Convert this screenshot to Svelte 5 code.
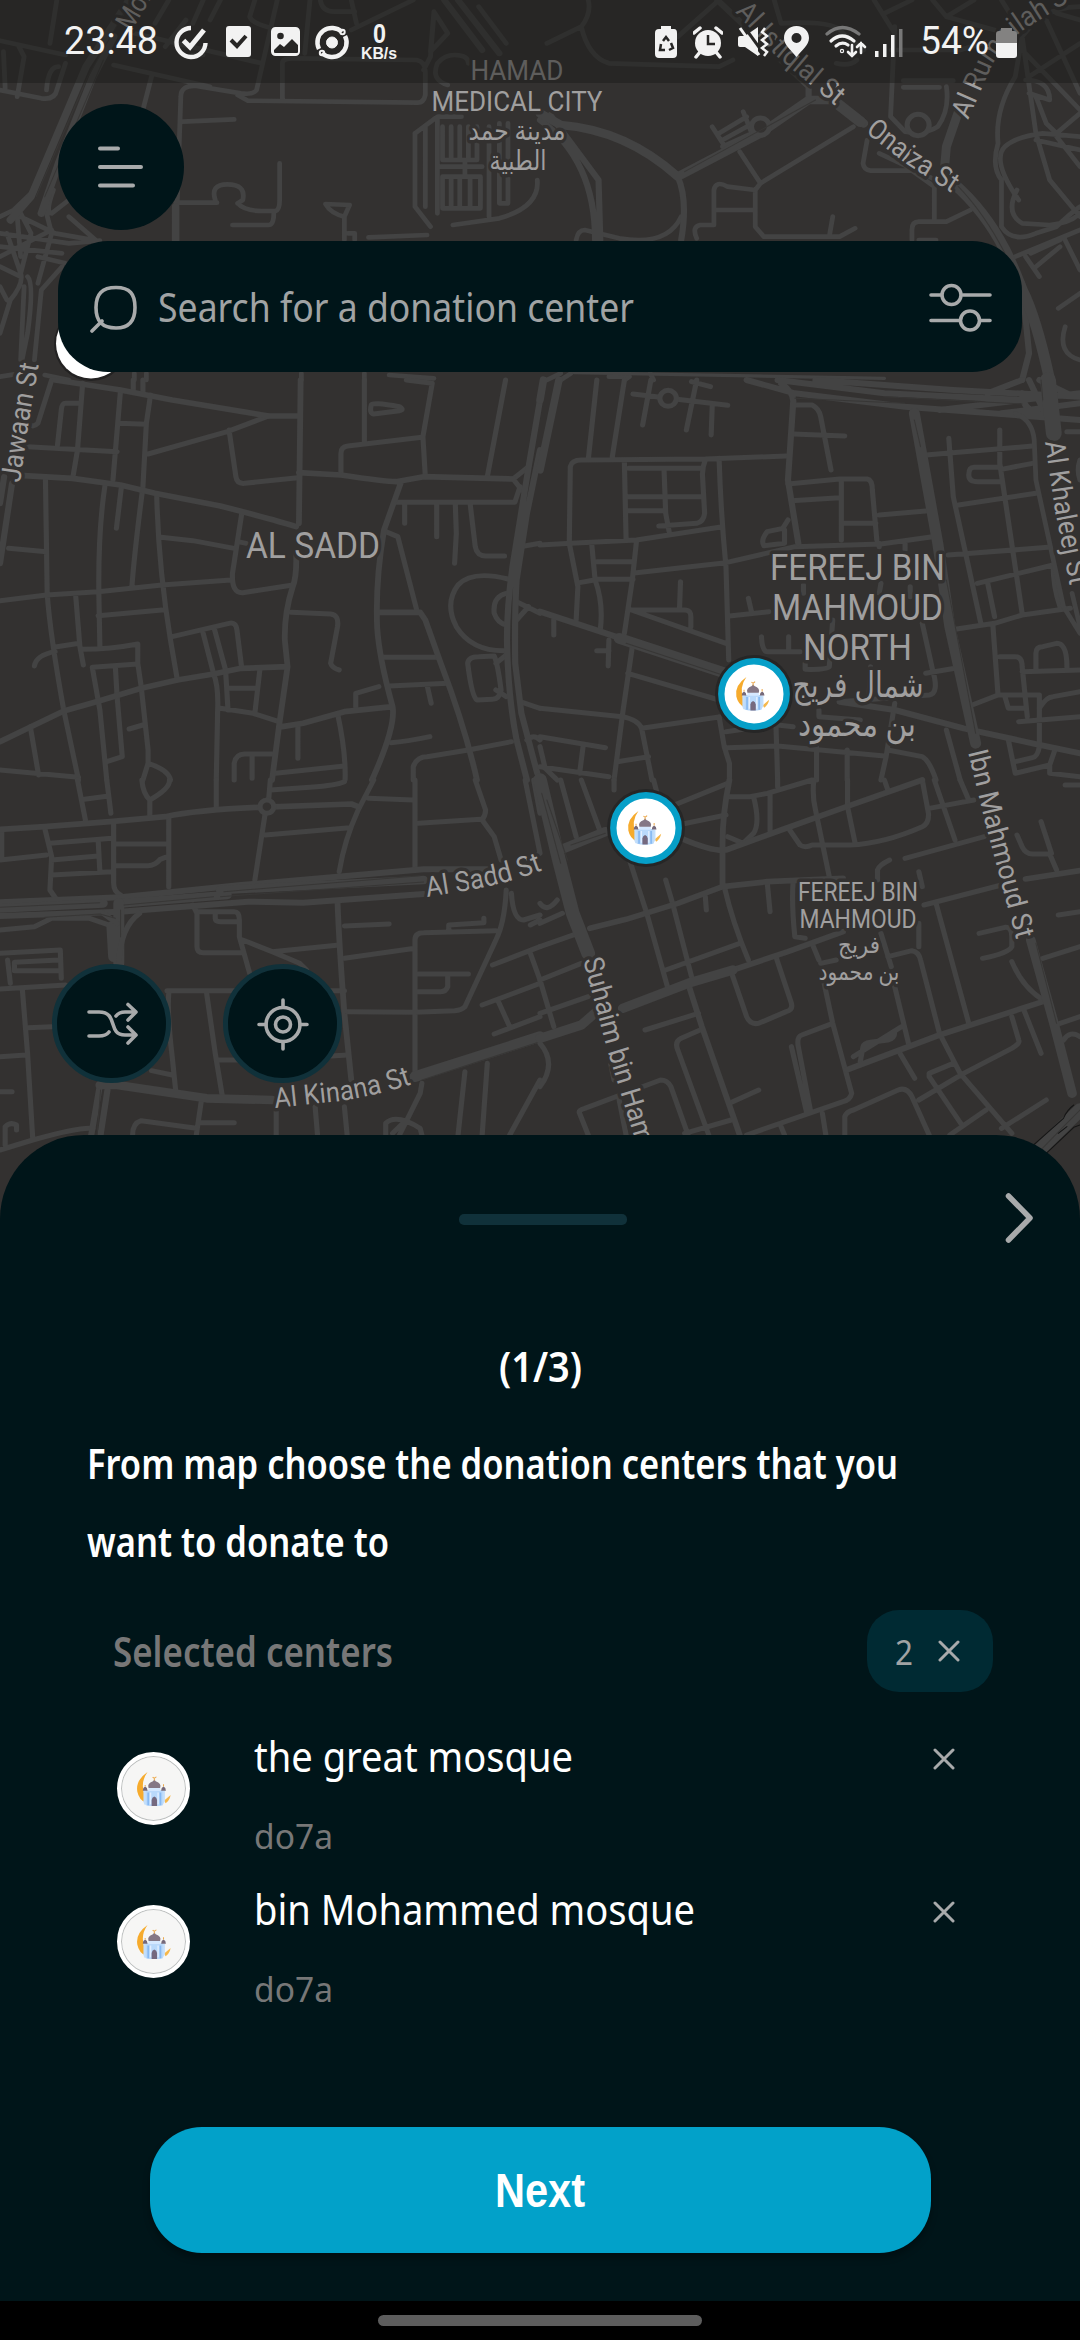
<script>
  // Road network, stored as map tiles: origin, then strokes by width.
  const tiles = [
    {
      x: 0, y: 0,
      roads: [
        [14, 'M165 0L145 130M0 122L190 165M10 155L15 265M55 140L70 170L50 290M0 270L120 295Q160 300 165 270L190 190M135 270Q140 200 170 200M330 195L610 260M390 100L760 190M740 0L725 50Q730 70 790 85M805 0L745 270Q735 285 700 280L570 258Q525 255 525 290L515 600M820 300V190Q820 175 850 175L1210 180Q1235 185 1235 215V285Q1230 310 1210 308L720 302L690 285M440 230L410 350M530 365L680 358M510 608H630M625 600Q610 553 660 553Q715 553 705 600L690 610M690 610Q710 633 760 633H800Q812 630 812 600V490M795 640Q795 675 780 675H675M900 0L885 160M930 0Q935 35 970 35H1030M1020 90L1200 0M1020 0L1035 70M1260 35L1300 100L1250 155ZM1260 40L1250 170L1230 210M1270 190Q1290 165 1320 165Q1360 165 1360 190M1270 190Q1250 240 1300 255M1390 20L1470 130M1205 400L1270 350H1340M1205 400V620L1250 680M1235 380V620M1270 350V640M1285 380V480H1385V380M1310 380V480M1335 380V480M1360 380V480M1285 530V625H1395V530ZM1310 530V625M1335 530V625M1365 530V625M1420 380V650M1450 370V610H1475V370M1280 500H1400M1350 480V530M1315 675L1450 655Q1568 620 1560 540M1240 705L1070 712M945 612Q960 640 1000 650L1015 615ZM1000 650V720M1030 720V700H1010M540 60L480 140M590 0L560 70M640 0L610 60M490 0L450 70M560 165H590M0 1130L60 1120M130 1125L200 1140M390 1120V1140M425 1120V1140M875 1120V1140M1058 1120V1140M1130 1125L1260 1135'],
        [14, 'M0 700L200 730L290 722M0 740L180 760M0 770L150 690M40 640L160 700L280 722M0 650L40 630L90 580M60 640L90 700L60 820M130 620L150 700L110 850M200 650L280 722M20 700L60 820Q70 850 30 900L0 1000M80 830Q100 850 80 1000L60 1100M180 800L120 870L100 1080M0 800L60 830M190 790L110 770M50 650L60 770M155 570Q130 640 150 640L200 600M20 900L0 860M60 1080L70 860'],
        [22, 'M375 0L250 200L90 590L30 660M330 110L270 230L170 490L120 640M510 620V722'],
        [18, 'M1290 0L1400 150M1330 0L1450 160']
      ],
      seams: 'M360 40L255 230L105 590M300 180L130 590'
    },
    {
      x: 540, y: 0,
      roads: [
        [14, 'M140 0Q150 40 120 80L20 130M120 80Q140 170 200 190L520 200L560 180M400 110L520 0M680 0L700 70Q860 60 880 100L940 150M690 140Q700 180 760 190M860 190Q900 200 920 180M500 380L540 445M520 400L600 350M590 335L615 400L530 440M530 420L600 380M410 650Q370 740 230 715L130 690Q110 690 105 720M580 455L640 550L910 380M640 550L625 570L545 560Q510 540 505 570V675H465Q440 680 455 715M510 630H620M625 570V680L650 710H870L915 685M850 650L840 710M950 420L938 490Q940 510 960 512H1080L1145 560V660M985 460L1150 540M1250 630L1180 665H1100Q1080 665 1080 690V720M1030 80L1018 350L1060 395Q1120 405 1155 380Q1190 330 1180 260M1055 242H1200M1055 262H1160M1020 150H1220L1380 100M970 0L1030 100M1000 40L1080 0M1140 0L1180 50L1260 0M1180 50L1320 90M1340 0L1400 100M1568 20Q1500 20 1440 60L1400 110L1380 230Q1320 330 1330 430Q1310 500 1340 540V680Q1370 730 1440 700L1500 680Q1540 640 1568 620M1400 110L1440 400L1480 540L1568 650M1470 60L1568 280M1568 130L1420 230M1400 150L1568 330M1500 40L1568 60M1410 240Q1480 240 1480 300L1420 280M1440 290L1470 370L1500 400L1568 340M1568 410L1460 400Q1380 410 1350 440Q1310 480 1390 600M1500 410L1568 500M1385 570Q1350 640 1400 670L1480 675Q1540 670 1568 640M1568 450L1440 420M1380 770L1568 690M1410 770L1450 830M1425 760L1510 720M1440 800L1510 740M1520 710L1568 810M1505 925L1568 880M1525 980Q1500 1060 1568 1080M60 1120L20 1140M90 1120L60 1140M200 1130H260L245 1140M320 1120L330 1140M1100 720H1150'],
        [18, 'M515 0L780 260V300M1400 850L1420 1060L1400 1140M0 360Q160 480 160 720M30 345L170 540L175 720M400 530Q430 600 410 720'],
        [26, 'M0 340L60 375Q250 390 400 530L640 400L780 300H850L940 370M1220 320L1180 440L1175 500'],
        [32, 'M850 300L930 365M1200 550Q1290 630 1350 750Q1370 790 1400 870Q1440 950 1480 1140'],
        [10, 'M100 1118L1000 1135']
      ],
      rings: [[640, 380, 26], [1098, 375, 32]],
      seams: 'M800 300L420 515M1215 560Q1290 640 1350 760'
    },
    {
      x: 0, y: 380,
      roads: [
        [15, 'M150 0L110 130Q100 140 92 137M780 108L660 155L430 222M665 150L685 290Q688 312 710 310L865 293M240 10L225 210L212 290M235 70H190Q180 70 178 90L167 195M80 200L340 215M350 30L328 300M345 130L425 133M437 45L425 130L415 320Q390 520 383 620M387 0V30M415 0V40M132 300L137 640Q145 760 185 990L228 1200M305 315Q285 450 287 640L290 800M352 325L338 445M455 345Q460 560 495 780L515 900M702 400L675 580Q672 640 705 638L850 615M468 472L560 482L680 505M690 485L715 490M25 505L135 515M0 662L135 645L285 635L470 615L670 600M285 707L470 690M165 800L230 790M220 650L232 800L242 855M240 808Q320 808 400 792V850L410 920L430 1110V1150L415 1200M430 1150Q490 1170 495 1200M100 858Q105 825 160 815M400 852L268 862L290 990L310 1200M335 860L340 950L355 1130L310 1145M88 1040L112 1185M375 1047L415 1035M0 1170L228 1192M500 770L665 730Q685 725 688 750L702 865M590 760L620 880Q635 920 632 990L628 1200M622 745L655 870L662 990M662 925H745M755 865L740 1000M640 985L735 1000L810 1025M845 697L960 702Q985 705 980 740L960 850Q965 865 985 870M990 280V220Q990 200 1010 198L1225 172M1058 0V185M1078 75Q1080 65 1160 80Q1175 90 1160 92L1085 102Q1072 100 1078 75M1180 0L1255 10L1228 170L1235 290M1468 0L1415 290M1150 367H1495L1510 320M1175 370V430M1268 370V470M1322 370L1325 460L1320 550M1365 370L1380 500Q1385 528 1410 528H1465M1120 455L1155 470L1210 690M1110 832H1270M1130 918L1300 910M1240 915L1252 970M865 1040V1135M980 1000Q1005 1120 1002 1200M1033 980V940L1100 920M800 1180L1000 1158M1135 1088Q1180 1085 1248 1070M680 1200V1150Q685 1122 710 1122H795M732 1122V1195M1200 1200V1160Q1210 1130 1240 1130L1360 1110L1485 1085M1475 597Q1370 570 1330 615Q1290 670 1325 740Q1370 815 1470 812M1470 640Q1430 650 1435 700Q1445 730 1470 735M1358 850Q1360 830 1390 830L1435 828Q1445 850 1455 930Q1450 958 1430 958L1385 960Q1370 950 1358 850M1440 850L1470 825M1440 930L1470 950M1490 297L1535 260M1490 297L1515 330M1568 490L1510 500M1500 665L1568 700M1500 720L1535 680M1510 965L1568 985M1530 1080Q1550 1060 1568 1080'],
        [17, 'M160 0L350 30L500 60L780 108H865M70 287L210 295L350 315L450 340L640 378Q800 420 860 440M873 0L868 430M0 1085L90 1040L185 993L280 965L410 925L515 900L620 882L700 865L835 860M860 520Q862 590 850 620Q825 700 827 780L835 860L810 1040L790 1200M868 278L990 285Q1120 305 1150 305L1230 290L1490 297M1165 305L1115 450Q1090 600 1095 740Q1100 830 1140 980Q1150 1040 1080 1200M1100 697H1220L1235 720L1280 850Q1350 1040 1385 1200M820 1040L880 1030L1000 995L1140 980'],
        [18, 'M1568 60L1535 260L1488 560Q1472 680 1472 780Q1475 950 1500 1080L1530 1200M1568 210L1530 400L1500 600Q1494 700 1496 850L1514 1000L1560 1180'],
        [18, 'M35 310L0 550M12 290L0 370']
      ]
    },
    {
      x: 540, y: 380,
      roads: [
        [15, 'M140 240L165 0M245 0L210 230M0 495L90 490L280 480L530 440M85 490L88 260Q92 240 120 240L480 237L715 228M245 245L250 480M258 265H470M360 265L365 400L375 455M480 240Q470 265 472 290L478 400Q475 425 455 430L345 438M255 350H470M255 392H360M270 42L545 76M322 0L298 135M455 0L425 150M440 5L495 20M500 80L497 165M520 235Q525 400 540 560L548 840M150 490L160 600Q185 670 175 750M85 490L110 620L105 720M165 545H270M115 608L170 598H270M280 485L268 600L245 760M268 800L240 1000L215 1200M280 578L540 548L740 500L990 492L1140 470M265 690L540 790M265 690H420Q440 690 438 715V740M408 605L405 690M605 655L615 700M550 708L665 695M40 720V765M200 780L198 858M165 812H200M255 880L520 960M0 985L240 1010Q285 1020 295 1045L325 1200M295 1045L515 1012M225 1145L315 1130M0 1070L190 1103M0 1100L15 1165L50 1200M125 1100L115 1180M0 1160L200 1190M520 1010L535 1100L550 1150V1200M540 1055L590 1048M545 1103L690 1098L1000 1128M685 1030L690 1200M803 1100V1200M892 1110V1200M735 1040L690 1035M735 75H790Q810 85 815 110L845 270M735 162L885 168M720 312L870 297H950Q965 300 965 330L978 480M875 300V480M730 362L870 353M880 430H975M985 405L1120 393M985 490V500M720 420L705 445L660 455Q640 480 650 497L710 490V450M765 615V640M850 720L840 860Q835 870 770 868V850M643 770Q645 815 660 815H755M722 770V810M990 610L985 640M1075 620V650M1060 490V510M960 860L955 960M1120 225L1430 198M1187 175L1200 350L1280 730M1335 150V250L1400 700M1215 375L1440 340M1335 262H1260Q1245 262 1245 285Q1245 305 1270 305H1335M1340 268L1430 250M1185 525L1475 502M1270 610L1490 555M1300 610L1320 710M1205 748L1320 730L1400 705L1540 685M1490 555Q1490 620 1510 680M1110 730L1140 870Q1160 940 1130 945L870 965M1120 880L1205 865M1255 975L1330 945M1330 945H1450V1100Q1445 1130 1430 1133L1380 1145M1315 735L1330 945M1335 830H1380Q1400 830 1400 860L1415 1010M1450 985Q1470 950 1490 950L1568 935M1390 1025L1568 1010M1350 950L1360 985H1410M1440 865V820Q1440 800 1460 800L1500 790Q1530 790 1530 860M1400 875L1568 870M1180 1050L1220 1200M1030 970L1005 1130L990 1200M1010 1110L1110 1130Q1130 1140 1150 1200M1360 1080L1380 1180L1480 1155L1495 1110M1480 1155V1180L1568 1190M810 990V1010L930 1020M1530 155H1568M1568 240Q1558 270 1568 300'],
        [18, 'M600 0L740 40L1060 80L1568 120M690 0L1000 40L1400 60L1568 40M800 0L1200 30L1568 50M1300 40L1400 0M1420 0L1480 130M1550 50L1450 0M1340 100L1568 70M1160 90L1400 60M1400 40Q1400 100 1480 110M700 10Q740 40 735 70L720 300L750 490M0 695L220 770M870 965L1030 990L1230 1045L1430 1090L1568 1120'],
        [14, 'M1380 100Q1430 120 1435 180L1440 300L1520 680L1568 760M1545 640L1568 740'],
        [22, 'M10 0L0 60M55 0L0 270'],
        [32, 'M230 775L540 880M1087 100L1155 490L1190 740L1265 1090'],
        [46, 'M1475 0L1492 160']
      ],
      rings: [[372, 55, 24]],
      seams: 'M250 790L530 885M1087 120L1105 200M1180 600L1265 1060M740 55L1060 70M1000 50L1400 72M1455 0L1460 60'
    },
    {
      x: 0, y: 780,
      roads: [
        [15, 'M225 0L248 120M310 0L322 100M245 58L315 48M412 0Q415 40 435 60V105M492 0Q495 25 435 60M628 0V85M785 30L900 22Q980 15 1000 5M785 0L780 60M770 100L740 300M770 165L1015 143M1085 0L1040 90Q1000 180 985 275M1070 55L1200 60M1205 0V265M1215 130L1395 118M1380 0L1410 90Q1410 105 1400 120L1435 170L1455 240M130 145L150 230L145 330L165 360M0 240L135 225M5 150V235M145 190L325 175M285 180L290 275M150 240L285 228M150 285L325 275M330 130V310Q330 335 350 345M335 192H485M335 257H430Q450 257 465 238L480 232M490 115V320M0 450L100 440L150 415H260L330 440M560 375L572 400V500Q572 518 590 518H705M625 395V415Q625 425 640 425H690M575 395H680Q695 395 695 420V470L725 580M705 480L790 515L870 550L890 570M790 515L985 495M1000 438L1130 432M1000 535L1205 505M1303 450V435L1405 428V415M1205 880V480Q1205 458 1230 458L1440 452M1470 330Q1465 430 1440 480L1350 680Q1340 690 1320 692L1205 697L1010 695M1215 582H1360M1300 590V620Q1295 635 1280 635H1215M1485 340Q1490 420 1520 420L1568 405M1540 435L1568 420M1430 555L1568 500M1540 520L1568 600M1400 675L1568 610M1445 660L1480 740M1435 762L1568 710M0 520L175 510L178 595M22 540L30 610M170 540L42 547V572H170M0 627L190 615M65 630L80 820L95 1075M80 743L150 740M0 830L75 825M485 632H1000M490 640Q485 700 500 830L510 930M600 640L625 820L645 945M630 840H710M440 872L500 885M960 828L1010 825M585 960L570 1065M385 1065Q385 1030 410 1022L570 1045M585 1028H680M802 990V1065M915 980L922 1065M1000 980L1008 1065M1225 910L1220 940L1160 1065M1350 875L1330 1065M1415 850L1400 1065M1568 900L1480 1065M1120 1065V1030Q1150 1000 1220 1045L1225 1065M1140 1060L1170 1030M15 1095V1040Q30 1025 48 1035V1050M0 935H35M1550 0L1568 100M1525 0L1568 220L1540 240M0 1110L95 1080Q230 1040 270 1045'],
        [17, 'M0 148L130 140L320 125L480 110Q570 90 750 82L1020 72L1040 80M980 365Q985 500 1000 700L1020 900'],
        [18, 'M0 367L350 352L700 315L1230 268H1420M0 408L350 395L720 365L880 368L1230 342M290 915L265 1065M312 930L292 1065'],
        [26, 'M640 330L1230 300M0 385L300 370M350 370L660 345M290 915L340 915L600 955L790 960'],
        [32, 'M345 370V550M325 440L330 530M1205 890L1568 770'],
        [16, 'M405 400Q350 440 345 550M300 400L340 430']
      ],
      rings: [[775, 80, 20]],
      seams: 'M0 382L290 368M360 375L620 350M640 350L1230 306M650 335L1220 287M350 390V470M1225 900L1568 785M292 930L282 1065M130 412L290 402L335 415'
    },
    {
      x: 540, y: 780,
      roads: [
        [15, 'M60 0L105 170M120 0L175 155M215 0V30M330 0L340 40M390 75L545 10M400 135L540 105M550 50H610L660 40L790 0M620 50Q640 130 620 160L590 190L545 170M668 45V160M690 0V20M795 0Q790 50 800 90L840 290M893 0V80L915 190M725 150L755 195Q770 205 790 195L900 195Q1000 190 1110 140Q1130 130 1128 100L1110 0M1000 0L1010 30M1130 85L1260 60M1145 0L1205 180M1220 0L1245 60M1060 235L1290 170M980 300V270Q985 255 1015 240M260 240L310 400L370 620M365 300L385 370L440 590M480 350L483 390M660 310L668 395M535 320Q560 430 605 540M735 305Q730 370 740 470L770 475M365 570L580 490M0 430L65 400M0 500L110 460M0 600L120 550M555 575L600 710Q610 735 635 730L715 695Q735 690 730 670L685 530M790 490L810 540M815 550L860 540M825 610L850 730L905 940Q900 960 880 965L600 1065M305 750L460 700M470 748L410 775Q390 785 400 810L490 1065M550 970L635 930M420 1060L555 1020M730 800L775 1000M850 730L760 765Q745 770 750 800L785 990M0 700L140 650M0 600L40 740M0 790Q50 850 0 920M140 1065L115 1000Q110 990 130 985L350 900Q370 900 380 920L430 1065M230 960L250 1065M205 850L215 900M1010 530L1080 512Q1100 515 1105 540L1160 760L1220 880L1370 1060M1100 275L1110 320M1100 430V500M1115 375L1340 315M1150 370L1245 730M1030 620L1070 790M910 830L1050 740M930 845L938 800Q940 790 960 787L1010 780Q1030 775 1030 755M1045 820L1088 895M1370 710L1390 780Q1395 790 1370 805L1230 880L1100 960M1200 850L1130 880V890L1225 1035M1405 690L1455 820M1385 165L1400 200Q1410 222 1430 222H1480L1500 270M1455 125L1485 220M1275 460L1350 442Q1370 440 1370 470V500Q1360 520 1285 535M1370 545Q1400 620 1460 660M1460 535L1568 500M1510 730L1568 710M1505 405L1568 395M1525 15H1568M1520 780Q1540 750 1568 770M885 1065V1010Q890 995 910 990L1040 930Q1065 920 1080 950L1130 1065M1190 1065L1295 990M1340 1045L1470 960M700 1040L710 1065M820 1000L830 1065M990 460L1020 560M0 370Q20 400 50 360'],
        [17, 'M550 0Q530 100 530 190V320M410 175Q500 215 540 210L700 150L890 80L1110 0M145 445L250 418L400 370L530 320L660 305L880 295M430 610L470 740L580 1065M560 570L720 515L880 455M890 870L1160 765L1460 665M1410 297L1568 272'],
        [28, 'M240 685L430 610L560 570M0 775L120 735L170 690M1425 480L1495 740L1545 940M70 205L190 155'],
        [40, 'M0 0L55 240L95 400L140 520M1568 990L1440 1120']
      ],
      seams: 'M5 40L60 250M20 60L80 240M90 195L190 160M1440 490L1500 730M1568 990L1520 1040L1440 1125',
      rails: 'M1550 975Q1530 990 1520 1015L1435 1093M1568 1035L1550 1042L1460 1130M1530 1040L1505 1060'
    }
  ];

  const areaLabels = [
    [517, 80, 93, 28, 'HAMAD'], [517, 111, 171, 28, 'MEDICAL CITY'],
    [517, 140, 97, 27, 'مدينة حمد'], [518, 170, 57, 27, 'الطبية'],
    [313, 558, 134, 37, 'AL SADD'],
    [857.5, 580, 175, 37, 'FEREEJ BIN'], [857.5, 620, 171, 37, 'MAHMOUD'], [857.5, 660, 109, 37, 'NORTH'],
    [858, 697, 131, 35, 'شمال فريج'], [857, 736, 118, 35, 'بن محمود'],
    [858, 901, 120, 26, 'FEREEJ BIN'], [858, 928, 117, 26, 'MAHMOUD'],
    [859, 953, 42, 24, 'فريج'], [859, 980, 81, 24, 'بن محمود']
  ];

  const streetLabels = [
    ['sadd', 'M427 897L470 890Q510 883 548 868', 'Al Sadd St', 119],
    ['kinana', 'M275 1108L340 1101Q380 1095 415 1083', 'Al Kinana St', 139],
    ['suhaim', 'M583 960L608 1052L649 1185', 'Suhaim bin Hamad', 222],
    ['ibn', 'M968 752L985 822L1017 942', 'Ibn Mahmoud St', 194],
    ['khaleej', 'M1045 442L1055 510L1071 592', 'Al Khaleej St', 146],
    ['onaiza', 'M865 132L905 163L955 195', 'Onaiza St', 106],
    ['istiqlal', 'M735 12L775 55L838 108', 'Al Istiqlal St', 138],
    ['rumailah', 'M968 120L990 70Q1005 40 1030 26L1090 -12', 'Al Rumailah St', 170],
    ['jawaan', 'M20 483L29 420L40 358', 'Jawaan St', 120],
    ['mohammed', 'M131 32L165 -25', 'Moh', 48]
  ];

  const centers = [
    { name: 'the great mosque', width: 319, city: 'do7a' },
    { name: 'bin Mohammed mosque', width: 441, city: 'do7a' }
  ];
</script>

{#snippet fit(text, width, size, weight, kind)}
  <svg class="fit {kind}" {width} height="60" aria-label={text}>
    <text x="0" y="44" font-size={size} font-weight={weight} textLength={width} lengthAdjust="spacingAndGlyphs">{text}</text>
  </svg>
{/snippet}

{#snippet mosque()}
  <path d="M31 0Q-5 25 1 58Q6 82 26 90L22 66Q9 30 31 0Z" fill="#f6ab2d" />
  <path d="M99 68L80 84L84 92Q96 84 99 68Z" fill="#f6b84c" />
  <path d="M19 55H31V96H22L19 88ZM70 55H82V86L76 96H70Z" fill="#c4dffb" />
  <path d="M26 54H76V98Q50 104 26 98Z" fill="#b9d9fb" />
  <path d="M34 46H68V56H34Z" fill="#d5e8ff" />
  <path d="M33 60V98M69 60V98" stroke="#87b9f2" stroke-width="5" />
  <path d="M40 60V95M62 60V95" stroke="#e2eeff" stroke-width="4" />
  <path d="M34 47Q29 33 47 27L51 22L55 27Q73 33 68 47Z" fill="#857785" />
  <path d="M17 55Q17 46 24 43Q31 46 31 55ZM71 55Q71 46 78 43Q85 46 85 55Z" fill="#75697a" />
  <path d="M43 100V82Q44 74 51 72Q58 74 59 82V100Z" fill="#75697f" />
  <path d="M51 25V19M46 15Q51 21 57 14M24 43V38M78 43V36" fill="none" stroke="#eba84b" stroke-width="3" />
{/snippet}

{#snippet cross()}
  <svg class="cross" viewBox="0 0 22 22"><path d="M2 2L20 20M20 2L2 20" /></svg>
{/snippet}

<div class="screen">
  <svg class="map" viewBox="0 0 1080 1240" width="1080" height="1240">
    <rect width="1080" height="1240" fill="#333130" />
    {#each tiles as t}
      <g transform="translate({t.x} {t.y}) scale(.34439 .33333)" fill="none" stroke-linecap="round" stroke-linejoin="round">
        {#each t.roads as [w, d]}
          <path {d} stroke="#434343" stroke-width={w} />
        {/each}
        {#each t.rings ?? [] as [cx, cy, r]}
          <circle {cx} {cy} {r} fill="#333130" stroke="#434343" stroke-width="15" />
        {/each}
        {#if t.seams}<path d={t.seams} stroke="#383736" stroke-width="3" />{/if}
        {#if t.rails}<path d={t.rails} stroke="#151515" stroke-width="3" />{/if}
      </g>
    {/each}
    <g class="labels">
      {#each areaLabels as [x, y, w, size, text]}
        <text {x} {y} font-size={size} text-anchor="middle" textLength={w} lengthAdjust="spacingAndGlyphs">{text}</text>
      {/each}
      {#each streetLabels as [id, d, text, w]}
        <path {id} {d} fill="none" />
        <text font-size="28"><textPath href="#{id}" textLength={w} lengthAdjust="spacingAndGlyphs">{text}</textPath></text>
      {/each}
    </g>
    <circle cx="91" cy="344" r="37" fill="#232222" />
    <circle cx="91" cy="343.5" r="35" fill="#fff" />
    {#each [[754, 694], [646, 828]] as [x, y]}
      <circle cx={x} cy={y} r="39" fill="#262626" />
      <circle cx={x} cy={y} r="32.7" fill="#fff" stroke="#069fc8" stroke-width="6.4" />
      <g transform="translate({x - 18} {y - 17}) scale(.335)">{@render mosque()}</g>
    {/each}
  </svg>

  <header class="status">
    <div class="group">
      <svg class="clock" width="96" height="40"><text x="0" y="32" font-size="38" textLength="94" lengthAdjust="spacingAndGlyphs">23:48</text></svg>
      <svg width="36" height="36" viewBox="0 0 36 36" fill="none" stroke="#f2f2f2">
        <path d="M18 4A14.5 14.5 0 1 0 32.5 19" stroke-width="4.4" /><path d="M10.500 16.500L17 23L31 6" stroke-width="5" />
      </svg>
      <svg width="26" height="34" viewBox="0 0 26 34"><rect y="1" width="25" height="31" rx="3" fill="#f2f2f2" /><path d="M5 15L11 21L20 11" fill="none" stroke="#272625" stroke-width="4" /></svg>
      <svg width="30" height="34" viewBox="0 0 30 34"><rect x="1.500" y="3.500" width="26" height="26" rx="3" fill="#f2f2f2" stroke="#f2f2f2" stroke-width="3" /><circle cx="9.500" cy="11" r="3.300" fill="#272625" /><path d="M3 25L9 19L13 22L21 14L27 20V27Q27 28 26 28H4Q3 28 3 27Z" fill="#272625" /></svg>
      <svg width="36" height="36" viewBox="0 0 36 36" fill="none" stroke="#f2f2f2">
        <path d="M28 8A14.500 14.500 0 0 0 5 25M8 29A14.500 14.500 0 0 0 31 12" stroke-width="4.500" />
        <circle cx="18" cy="18.500" r="5.500" fill="#f2f2f2" /><circle cx="28.500" cy="8" r="2.200" stroke-width="2" /><circle cx="8" cy="29" r="2.200" stroke-width="2" />
      </svg>
      <svg class="speed" width="40" height="40"><text x="13" y="21" font-size="28" textLength="13" lengthAdjust="spacingAndGlyphs">0</text><text x="1" y="37" font-size="16.500" textLength="36" lengthAdjust="spacingAndGlyphs">KB/s</text></svg>
    </div>
    <div class="group right">
      <svg width="23" height="34" viewBox="0 0 23 34"><path d="M6 1H16V4H19Q22 4 22 8V29Q22 33 18 33H4Q0 33 0 29V8Q0 4 4 4H6Z" fill="#f2f2f2" /><path d="M8 16L11 12L14 16M16 18L18 23L14 25M10 25H5L6 19" fill="none" stroke="#272625" stroke-width="2.500" /></svg>
      <svg width="30" height="34" viewBox="0 0 30 34"><circle cx="15" cy="18" r="13" fill="#f2f2f2" /><path d="M15 10V19H22" fill="none" stroke="#272625" stroke-width="2.500" /><path d="M1 8L7 3M29 8L23 3M7 27L3 32M23 27L27 32" stroke="#f2f2f2" stroke-width="3.500" stroke-linecap="round" /></svg>
      <svg width="31" height="34" viewBox="0 0 31 34"><path d="M0 13Q0 11 2 11H7L20 2V31L7 22H2Q0 22 0 20Z" fill="#f2f2f2" /><path d="M5 0L26 29" stroke="#272625" stroke-width="3" /><path d="M2 3L21 30" stroke="#f2f2f2" stroke-width="3" /><path d="M27 3L24 7L29 11L24 15L29 19L24 23L29 27L26 31" fill="none" stroke="#f2f2f2" stroke-width="2.500" /></svg>
      <svg width="26" height="34" viewBox="0 0 26 34"><path d="M12.500 1C5 1 0 6 0 13C0 20 7 25 12.500 32C18 25 25 20 25 13C25 6 20 1 12.500 1ZM12.500 8A5 5 0 1 1 12.500 18A5 5 0 1 1 12.500 8Z" fill="#f2f2f2" fill-rule="evenodd" /></svg>
      <svg width="42" height="34" viewBox="0 0 42 34" fill="none" stroke="#f2f2f2" stroke-width="3.200" stroke-linecap="round"><path d="M2 9Q17 -4 34 9" stroke="#777" /><path d="M6 16Q17 6 29 16M11 21Q17 16 23 20" /><circle cx="17" cy="26" r=".6" /><path d="M27 20V31M23 27L27 31L31 27M36 28V18M32 22L36 18L40 22" stroke-width="2.600" /></svg>
      <svg width="28" height="34" viewBox="0 0 28 34"><path d="M0 26H3.500V32H0ZM8 19H11.500V32H8ZM16 10H19.500V32H16Z" fill="#f2f2f2" /><path d="M24 4H27.500V32H24Z" fill="#777" /></svg>
      <svg class="percent" width="70" height="40"><text x="0" y="32" font-size="38" textLength="69" lengthAdjust="spacingAndGlyphs">54%</text></svg>
      <svg width="21" height="34" viewBox="0 0 21 34"><path d="M5 3H16V6H18Q21 6 21 9V18H0V9Q0 6 3 6H5Z" fill="#838281" /><path d="M0 18H21V30Q21 33 18 33H3Q0 33 0 30Z" fill="#f2f2f2" /></svg>
    </div>
  </header>

  <section class="over-map">
    <button class="menu" aria-label="Menu">
      <svg width="46" height="42" viewBox="0 0 46 42"><path d="M2 2.500H20M2 21H43M2 39.500H35" /></svg>
    </button>
    <div class="search">
      <svg class="lens" width="50" height="50" viewBox="0 0 50 50"><path d="M27 4.500C41 4.500 46 11 46 24.500C46 38 40 45 27 45C13 45 7 38 7 24.500C7 11 13 4.500 27 4.500M13 38L3 48" /></svg>
      {@render fit('Search for a donation center', 476, 40, 400, 'hint')}
      <svg class="filters" width="64" height="50" viewBox="0 0 64 50"><path d="M2 12H12M34 12H61M2 37.500H30M52 37.500H61" /><circle cx="22.500" cy="12" r="9.500" /><circle cx="41" cy="37.500" r="9.500" /></svg>
    </div>
    <div class="tools">
      <button class="tool" aria-label="Shuffle">
        <svg width="54" height="54" viewBox="0 0 54 54"><path d="M4 15H14C34 15 22 38 40 38H50M4 39H14Q21 39 24 35M31 19Q34 15 40 15H50M43 7.500L51 15L43 23M43 30L51 38L43 46" /></svg>
      </button>
      <button class="tool" aria-label="Locate">
        <svg width="54" height="54" viewBox="0 0 54 54"><circle cx="27" cy="27.500" r="17" /><circle cx="27" cy="27.500" r="7.500" /><path d="M27 3V10M27 45V52M3 27.500H10M44 27.500H51" /></svg>
      </button>
    </div>
  </section>

  <main class="sheet">
    <div class="grab">
      <span></span>
      <svg class="next-arrow" width="30" height="52" viewBox="0 0 30 52"><path d="M4.500 4L26 26L4.500 48" /></svg>
    </div>
    <div class="step">{@render fit('(1/3)', 83, 41, 600, 'white')}</div>
    <div class="question">
      {@render fit('From map choose the donation centers that you', 811, 41, 600, 'white')}
      {@render fit('want to donate to', 302, 41, 600, 'white')}
    </div>
    <div class="summary">
      {@render fit('Selected centers', 280, 41, 600, 'muted')}
      <div class="count">{@render fit('2', 18, 34, 400, 'hint')}{@render cross()}</div>
    </div>
    <ul>
      {#each centers as c}
        <li>
          <div class="avatar"><svg viewBox="0 0 100 100" width="34" height="34">{@render mosque()}</svg></div>
          <div class="info">
            {@render fit(c.name, c.width, 42, 400, 'white')}
            {@render fit(c.city, 79, 34, 400, 'muted')}
          </div>
          {@render cross()}
        </li>
      {/each}
    </ul>
    <button class="go">{@render fit('Next', 90, 48, 600, 'white')}</button>
  </main>
  <footer><span></span></footer>
</div>

<style>
  :global(body) { background: #000; }
  .screen { position: relative; width: 1080px; height: 2340px; overflow: hidden; display: flex; flex-direction: column; font-family: 'Noto Sans', 'Open Sans', sans-serif; }
  svg { display: block; flex: none; }
  button { border: 0; padding: 0; display: flex; align-items: center; justify-content: center; }
  .map { position: absolute; left: 0; top: 0; }
  .labels { font-family: Roboto, 'DejaVu Sans', sans-serif; fill: #a09f9f; stroke: #333130; stroke-width: 7px; stroke-linejoin: round; }
  .labels text { paint-order: stroke; }
  .labels path { stroke: none; }
  .status { position: relative; box-sizing: border-box; height: 83px; padding: 22px 63px 0 64px; background: rgba(28, 27, 26, .5); display: flex; justify-content: space-between; align-items: flex-start; }
  .group { display: flex; align-items: center; height: 40px; gap: 15px; font-family: Roboto, sans-serif; fill: #f2f2f2; }
  .group:not(.right) svg:nth-child(2) { margin-left: -2px; }
  .group:not(.right) svg:nth-child(3) { margin-left: 2px; }
  .group:not(.right) svg:nth-child(4) { margin-left: 4px; }
  .group:not(.right) svg:nth-child(5) { margin-left: -2px; }
  .speed { font-family: 'Liberation Sans', sans-serif; font-weight: 700; margin-left: -5px; }
  .right svg:nth-child(6) { margin-left: -7px; }
  .right .percent { margin: 0 -9px 0 2px; }
  .over-map { position: relative; box-sizing: border-box; height: 1052px; padding: 21px 58px 0; display: flex; flex-direction: column; }
  .menu { width: 126px; height: 126px; border-radius: 50%; background: #001519; }
  .menu path { stroke: #a8aaab; stroke-width: 4; stroke-linecap: round; }
  .search { box-sizing: border-box; margin-top: 11px; height: 131px; border-radius: 50px; background: #001519; display: flex; align-items: center; padding: 0 29px 0 31px; }
  .lens { margin-right: 19px; margin-top: 2px; }
  .lens path, .filters path, .filters circle { fill: none; stroke: #a8aaab; stroke-width: 3.6; stroke-linecap: round; }
  .filters { margin-left: auto; margin-top: 2px; }
  .search .fit { margin-top: 3px; }
  .tools { display: flex; gap: 52px; margin: 592px 0 0 -6px; }
  .tool { box-sizing: border-box; width: 119px; height: 119px; border-radius: 50%; background: #001519; border: 5.500px solid #10313a; }
  .tool path, .tool circle { fill: none; stroke: #a8aaab; stroke-width: 3.6; stroke-linecap: round; stroke-linejoin: round; }
  .fit { overflow: visible; }
  .white { fill: #fff; }
  .hint { fill: #a0a3a4; }
  .muted { fill: #777; }
  .sheet { position: relative; box-sizing: border-box; height: 1166px; background: #001519; border-radius: 84px 84px 0 0; display: flex; flex-direction: column; }
  .grab { box-sizing: border-box; height: 164px; padding: 57px 46px 0 459px; display: flex; justify-content: space-between; align-items: flex-start; }
  .grab span { width: 168px; height: 11px; border-radius: 5px; background: #10313a; margin-top: 22px; }
  .next-arrow path { fill: none; stroke: #a8aaab; stroke-width: 5.500; stroke-linecap: round; stroke-linejoin: round; }
  .step { display: flex; justify-content: center; height: 60px; margin-top: 39px; }
  .question { margin: 37px 0 0 87px; display: flex; flex-direction: column; gap: 18px; }
  .summary { margin: 37px 87px 0 113px; height: 82px; display: flex; justify-content: space-between; align-items: center; }
  .summary > :global(.fit) { margin-top: 3px; }
  .count { box-sizing: border-box; width: 126px; height: 82px; border-radius: 32px; background: #002a33; padding: 0 33px 0 28px; display: flex; align-items: center; justify-content: space-between; }
  .cross { width: 22px; height: 22px; }
  .cross path { stroke: #a8aaab; stroke-width: 3; stroke-linecap: round; }
  ul { list-style: none; margin: 36px 0 0; padding: 0; }
  li { display: flex; height: 153px; padding: 0 125px 0 117px; align-items: flex-start; }
  .avatar { box-sizing: border-box; width: 73px; height: 73px; margin: 24px 64px 0 0; border-radius: 50%; background: #f6f6f5; border: 4px solid #fff; box-shadow: inset 0 0 0 1px #bcbfbf; display: flex; align-items: center; justify-content: center; }
  .info { flex: 1; display: flex; flex-direction: column; gap: 17px; }
  li > .cross { margin-top: 20px; }
  .go { width: 781px; height: 126px; margin: 93px auto 0; border-radius: 52px; background: #02a1c9; box-shadow: 0 5px 7px rgba(0, 0, 0, .3); }
  .go .fit { margin-top: 6px; }
  footer { position: relative; height: 39px; background: #000; display: flex; justify-content: center; align-items: flex-start; }
  footer span { width: 324px; height: 11px; margin-top: 14px; border-radius: 6px; background: #5d5d5d; }
</style>
